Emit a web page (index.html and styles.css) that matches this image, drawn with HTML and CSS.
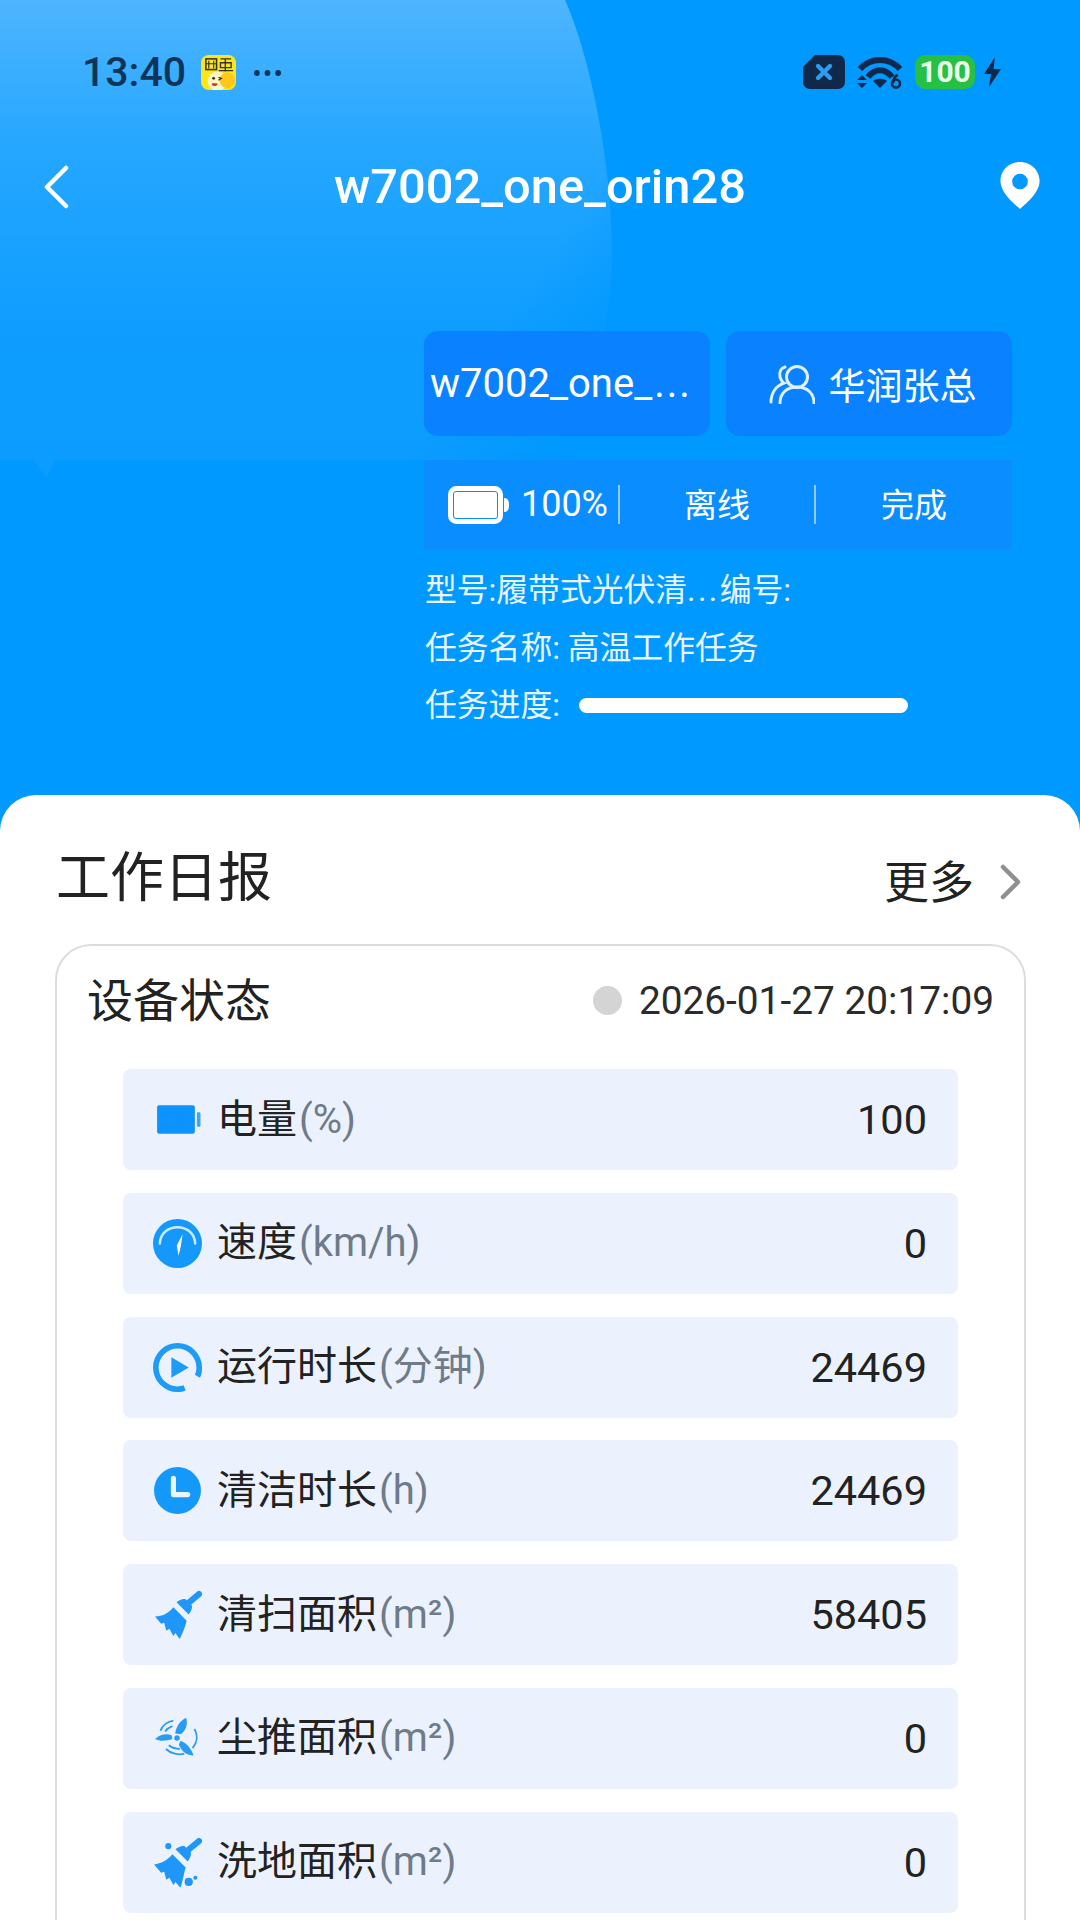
FILE: index.html
```html
<!DOCTYPE html>
<html lang="zh">
<head>
<meta charset="utf-8">
<title>w7002_one_orin28</title>
<link rel="stylesheet" href="styles.css">
</head>
<body>
<div class="page">
  <div class="glow"></div>
  <header class="hero">
    <div class="statusbar">
      <div class="status-left">
        <span class="clock">13:40</span>
        <svg class="appicon" viewBox="0 0 36 36"><rect width="36" height="36" rx="8" fill="#ffe61a"/><rect x="5" y="4" width="11" height="11" fill="none" stroke="#333" stroke-width="1.6"/><path d="M8 6v8M13 6v8M5 9h11" stroke="#333" stroke-width="1.2"/><path d="M20 4h11M20 8h11v5H20zM25 4v13M18 16h15" fill="none" stroke="#333" stroke-width="1.4"/><circle cx="17" cy="27" r="10" fill="#fff7c4"/><circle cx="27" cy="26" r="8" fill="#ffc81a"/><circle cx="13" cy="24" r="1.5" fill="#333"/><path d="M18 23l3 1-3 2" stroke="#333" stroke-width="1.2" fill="none"/><path d="M11 29h6c0 4-6 4-6 0z" fill="#d13b2a"/></svg>
        <svg class="dots" viewBox="0 0 30 8"><circle cx="4" cy="4" r="3"/><circle cx="15" cy="4" r="3"/><circle cx="26" cy="4" r="3"/></svg>
      </div>
      <div class="status-right">
        <svg class="sim" viewBox="0 0 42 34"><path d="M12 0H35a7 7 0 0 1 7 7V27a7 7 0 0 1-7 7H7a7 7 0 0 1-7-7V12z" fill="#10294a"/><path d="M15 11l12 12M27 11L15 23" stroke="#2f9bf0" stroke-width="4.4" stroke-linecap="round"/></svg>
        <svg class="wifi" viewBox="0 0 46 34"><path d="M3 14C14 2 32 2 43 14" fill="none" stroke="#10294a" stroke-width="6"/><path d="M11 22C18 13 28 13 35 22" fill="none" stroke="#10294a" stroke-width="6"/><path d="M16 26c4-3 10-3 14 0l-7 7z" fill="#10294a"/><path d="M0 25l5-5 5 5zM0 28l5 5 5-5z" fill="#10294a"/><circle cx="39" cy="28.500" r="4" fill="none" stroke="#10294a" stroke-width="2.600"/><path d="M36.300 28c0-4 2-7 4.500-8" fill="none" stroke="#10294a" stroke-width="2.600"/></svg>
        <span class="battery-pill"><span class="battery-num">100</span></span>
        <svg class="bolt" viewBox="0 0 17 30"><path d="M11 0L0 17h7l-2 13L17 12H9.500z" fill="#10294a"/></svg>
      </div>
    </div>

    <nav class="navbar">
      <svg class="back" viewBox="0 0 28 44"><path d="M24 3L5 22l19 19" fill="none" stroke="#fff" stroke-width="4.500" stroke-linecap="round" stroke-linejoin="round"/></svg>
      <h1 class="nav-title">w7002_one_orin28</h1>
      <svg class="pin" viewBox="0 0 40 48"><path fill-rule="evenodd" fill="#fff" d="M20 0c11 0 20 8.500 20 19.500C40 31 27 42 20 48 13 42 0 31 0 19.500 0 8.500 9 0 20 0zm0 12a8 8 0 1 0 0 16 8 8 0 0 0 0-16z"/></svg>
    </nav>

    <div class="hero-body">
      <div class="hero-media"></div>
      <div class="hero-info">
        <div class="chips">
          <div class="chip"><span class="chip-text">w7002_one_<span class="ell">...</span></span></div>
          <div class="chip chip-user">
            <svg class="user-icon" viewBox="0 0 46 40"><circle cx="28" cy="13" r="10.500" fill="none" stroke="#dff0ff" stroke-width="3"/><path d="M11 39c0-10 7-16 17-16s17 6 17 16" fill="none" stroke="#dff0ff" stroke-width="3" stroke-linecap="round"/><path d="M16 3c-4 1-6 5-5 10 1 3 2 5 4 6C7 22 2 29 2 38" fill="none" stroke="#dff0ff" stroke-width="3" stroke-linecap="round"/></svg>
            <span>华润张总</span>
          </div>
        </div>
        <div class="status-panel">
          <div class="cell cell-battery">
            <svg class="bat-icon" viewBox="0 0 62 38"><rect x="2.500" y="2.500" width="50" height="33" rx="6" fill="#0a8bff" stroke="#fff" stroke-width="5"/><rect x="6" y="6" width="43" height="26" rx="2" fill="#fff"/><path d="M56 12c4 0 5 3 5 7s-1 7-5 7z" fill="#fff"/></svg>
            <span>100%</span>
          </div>
          <div class="cell">离线</div>
          <div class="cell">完成</div>
        </div>
        <div class="info-line">型号:履带式光伏清<span class="ell-sm">...</span>编号:</div>
        <div class="info-line">任务名称: 高温工作任务</div>
        <div class="info-line progress-line">
          <span>任务进度:</span>
          <span class="progress"></span>
        </div>
      </div>
    </div>
  </header>

  <main class="sheet">
    <div class="sheet-head">
      <h2 class="sheet-title">工作日报</h2>
      <div class="more">
        <span>更多</span>
        <svg class="more-arrow" viewBox="0 0 22 36"><path d="M3 3l15 15L3 33" fill="none" stroke="#8f8f8f" stroke-width="4.500" stroke-linecap="round" stroke-linejoin="round"/></svg>
      </div>
    </div>

    <section class="card">
      <div class="card-head">
        <h3 class="card-title">设备状态</h3>
        <div class="stamp"><span class="stamp-dot"></span><span>2026-01-27 20:17:09</span></div>
      </div>
      <div class="rows">
        <div class="row">
          <div class="row-icon"><svg class="ico" viewBox="0 0 48 48"><rect x="4" y="10" width="37" height="28" rx="2" fill="#0d93ff"/><rect x="43" y="17" width="3.500" height="14" rx="1" fill="#3aa4f5"/></svg></div>
          <div class="row-label">电量<span class="unit">(%)</span></div>
          <div class="row-value">100</div>
        </div>
        <div class="row">
          <div class="row-icon"><svg class="ico" viewBox="0 0 48 48"><circle cx="24" cy="24" r="24" fill="#1499fb"/><path d="M6.700 24C7 14 15 8 24 8s17 6 17.300 16" fill="none" stroke="#cfe9ff" stroke-width="2.400" stroke-linecap="round"/><path d="M29 15L27.200 27 25 36l-1.700-10z" fill="#fff"/></svg></div>
          <div class="row-label">速度<span class="unit">(km/h)</span></div>
          <div class="row-value">0</div>
        </div>
        <div class="row">
          <div class="row-icon"><svg class="ico" viewBox="0 0 48 48"><path d="M46 34c2-3 2-7 2-10A24 24 0 1 0 24 48c3 0 6-.500 8-1.500l-2-5c-2 .800-4 1-6 1a18.500 18.500 0 1 1 18.500-18.500c0 2.500-.300 5-1.500 7z" fill="#1e9bf5"/><path d="M18 14l17 10-17 10z" fill="#1e9bf5"/></svg></div>
          <div class="row-label">运行时长<span class="unit">(分钟)</span></div>
          <div class="row-value">24469</div>
        </div>
        <div class="row">
          <div class="row-icon"><svg class="ico" viewBox="0 0 48 48"><circle cx="24" cy="24" r="23" fill="#1499fb"/><path d="M20 12v16h14" fill="none" stroke="#eaf6ff" stroke-width="5" stroke-linecap="round" stroke-linejoin="round"/></svg></div>
          <div class="row-label">清洁时长<span class="unit">(h)</span></div>
          <div class="row-value">24469</div>
        </div>
        <div class="row">
          <div class="row-icon"><svg class="ico" viewBox="0 0 48 48"><path d="M33 14L45 4" stroke="#1e96fa" stroke-width="6" stroke-linecap="round"/><path d="M23 12c3-2 6-4 9-3l6 6c1 3-1 6-3 9z" fill="#1e96fa"/><path d="M20 17L33 30C31 37 29 43 26 48L22 42 20 45 16 38 13 40 11 32 8 33 2 26C9 26 15 23 20 17z" fill="#1e96fa"/></svg></div>
          <div class="row-label">清扫面积<span class="unit">(m²)</span></div>
          <div class="row-value">58405</div>
        </div>
        <div class="row">
          <div class="row-icon"><svg class="ico ico-fan" viewBox="0 0 48 48"><circle cx="24" cy="24" r="3" fill="#2a9bf5"/><path d="M22 19c1-6 4-13 12-17 2 7 0 14-6 18z" fill="#2a9bf5"/><path d="M19 25c-6 2-13 3-19 0 6-5 13-6 18-4z" fill="#2a9bf5"/><path d="M28 27c6 2 12 9 14 16-7 0-13-4-16-12z" fill="#2a9bf5"/><path d="M6 16c2-6 8-10 14-11M11 17c2-3 5-5 8-6M43 14c4 7 3 15-2 21M12 36c5 5 14 7 20 5M15 32c4 3 8 4 12 4" fill="none" stroke="#2a9bf5" stroke-width="2"/></svg></div>
          <div class="row-label">尘推面积<span class="unit">(m²)</span></div>
          <div class="row-value">0</div>
        </div>
        <div class="row">
          <div class="row-icon"><svg class="ico" viewBox="0 0 48 48"><path d="M33 13L45 3" stroke="#1e96fa" stroke-width="6" stroke-linecap="round"/><path d="M22 11c3-2 6-4 9-3l6 6c1 3-1 6-3 9z" fill="#1e96fa"/><path d="M19 16L32 29C30 36 29 43 27 49L22 43 20 46 16 39 13 41 11 33 8 34 1 26C8 25 14 22 19 16z" fill="#1e96fa"/><circle cx="15" cy="8" r="3" fill="#1e96fa"/><circle cx="35" cy="43" r="4" fill="#1e96fa"/><circle cx="41.500" cy="39" r="2" fill="#1e96fa"/></svg></div>
          <div class="row-label">洗地面积<span class="unit">(m²)</span></div>
          <div class="row-value">0</div>
        </div>
      </div>
    </section>
  </main>
</div>
</body>
</html>
```
FILE: styles.css
```css
* { box-sizing: border-box; margin: 0; padding: 0; }
html, body { width: 1080px; height: 1920px; overflow: hidden; }
body { font-family: Roboto, "Noto Sans CJK SC", sans-serif; color: #222; }

.page {
  position: relative;
  width: 1080px;
  height: 1920px;
  overflow: hidden;
  background: #0099ff;
  display: flex;
  flex-direction: column;
}
.glow {
  position: absolute;
  left: 0; top: 0;
  width: 620px;
  height: 480px;
  background: linear-gradient(180deg, rgba(130,200,255,.6) 0%, rgba(110,195,255,.34) 30%, rgba(70,175,255,.2) 70%, rgba(50,165,255,.24) 100%);
  clip-path: path("M0 0H565C592 60 612 170 612 250C612 320 590 400 570 460H55L47 478 33 460H0Z");
  -webkit-mask-image: linear-gradient(125deg, #000 76%, transparent 92%);
  mask-image: linear-gradient(125deg, #000 76%, transparent 92%);
}

.hero { position: relative; height: 795px; flex: none; color: #fff; }

.statusbar {
  height: 144px;
  padding: 55px 79px 0 82px;
  display: flex;
  justify-content: space-between;
  align-items: flex-start;
}
.status-left { display: flex; align-items: center; height: 35px; }
.clock { font-size: 41px; font-weight: 500; color: #0e3559; line-height: 35px; width: 119px; }
.appicon { width: 35px; height: 35px; }
.dots { width: 29px; height: 8px; margin-left: 17px; fill: #0e3559; }
.status-right { display: flex; align-items: center; height: 34px; }
.sim { width: 42px; height: 34px; margin-right: 12px; }
.wifi { width: 46px; height: 34px; margin-right: 12px; }
.battery-pill {
  width: 60px; height: 34px;
  border-radius: 10px;
  background: #25c044;
  display: flex; align-items: center; justify-content: center;
  margin-right: 9px;
}
.battery-num { font-size: 30px; font-weight: 700; color: #eaffea; line-height: 34px; }
.bolt { width: 17px; height: 30px; }

.navbar {
  height: 86px;
  padding: 0 40px 0 42px;
  display: flex;
  align-items: center;
  justify-content: space-between;
}
.back { width: 28px; height: 44px; }
.nav-title { font-size: 48.800px; font-weight: 500; line-height: 86px; color: #fff; margin-left: 10px; }
.pin { width: 40px; height: 47px; margin-top: -4px; }

.hero-body { display: flex; padding-top: 101px; }
.hero-media { width: 424px; flex: none; }
.hero-info { width: 588px; }

.chips { display: flex; gap: 16px; }
.chip {
  width: 286px; height: 105px;
  background: #0a82ff;
  border-radius: 14px;
  display: flex; align-items: center; justify-content: center;
  padding: 0 6px;
  font-size: 40px;
}
.chip-text { display: block; width: 100%; white-space: nowrap; }
.ell { letter-spacing: 2px; margin-left: 2px; }
.ell-sm { letter-spacing: 2.500px; }
.chip-user { gap: 14px; font-size: 37px; padding-left: 13px; }
.user-icon { width: 46px; height: 40px; }

.status-panel {
  margin-top: 24px;
  height: 89px;
  background: #0a8dff;
  display: grid;
  grid-template-columns: repeat(3, 196px);
  align-items: center;
}
.cell {
  height: 39px;
  font-size: 33px;
  line-height: 41px;
  text-align: center;
  border-right: 2px solid rgba(255,255,255,.55);
}
.cell:last-child { border-right: 0; }
.cell-battery { display: flex; align-items: center; justify-content: flex-end; gap: 11px; padding-right: 10px; font-size: 36px; }
.bat-icon { width: 62px; height: 38px; }

.info-line { height: 57.500px; font-size: 31.800px; line-height: 57px; color: #e9f5ff; padding-left: 1px; }
.status-panel + .info-line { margin-top: 13px; }
.progress-line { display: flex; align-items: center; gap: 19px; }
.progress { display: block; width: 329px; height: 15px; border-radius: 8px; background: #fff; }

.sheet {
  flex: 1;
  background: #fff;
  border-radius: 36px 36px 0 0;
  padding: 44px 54px 0 55px;
}
.sheet-head { display: flex; justify-content: space-between; align-items: center; height: 80px; padding: 0 4px 0 1px; }
.sheet-title { font-size: 54px; font-weight: 400; line-height: 80px; color: #222; }
.more { display: flex; align-items: center; gap: 26px; font-size: 45px; color: #222; }
.more-arrow { width: 22px; height: 36px; margin-top: 5px; }

.card {
  margin-top: 25px;
  border: 2px solid #dcdcdc;
  border-radius: 36px;
  padding: 0 30px;
  height: 1100px;
  background: #fff;
}
.card-head { height: 123px; display: flex; justify-content: space-between; align-items: center; padding-bottom: 14px; }
.card-title { font-size: 46px; font-weight: 400; color: #222; margin-bottom: 8px; }
.stamp { display: flex; align-items: center; gap: 17px; font-size: 38.800px; color: #2b2b2b; }
.stamp-dot { width: 29px; height: 29px; border-radius: 50%; background: #d4d4d4; }

.rows { margin: 0 36px; display: flex; flex-direction: column; gap: 22.800px; }
.row {
  height: 101px;
  background: #ecf2fd;
  border-radius: 8px;
  display: flex;
  align-items: center;
  padding: 0 31px 0 29px;
}
.row-icon { width: 50px; height: 50px; flex: none; display: flex; align-items: center; justify-content: center; }
.ico { width: 49px; height: 49px; display: block; }
.ico-fan { width: 44px; height: 44px; }
.row-label { margin-left: 15px; flex: 1; font-size: 40px; color: #222; line-height: 1; }
.unit { color: #6f7b88; margin-left: 2px; }
.row-value { font-size: 41.500px; color: #222; }
```
